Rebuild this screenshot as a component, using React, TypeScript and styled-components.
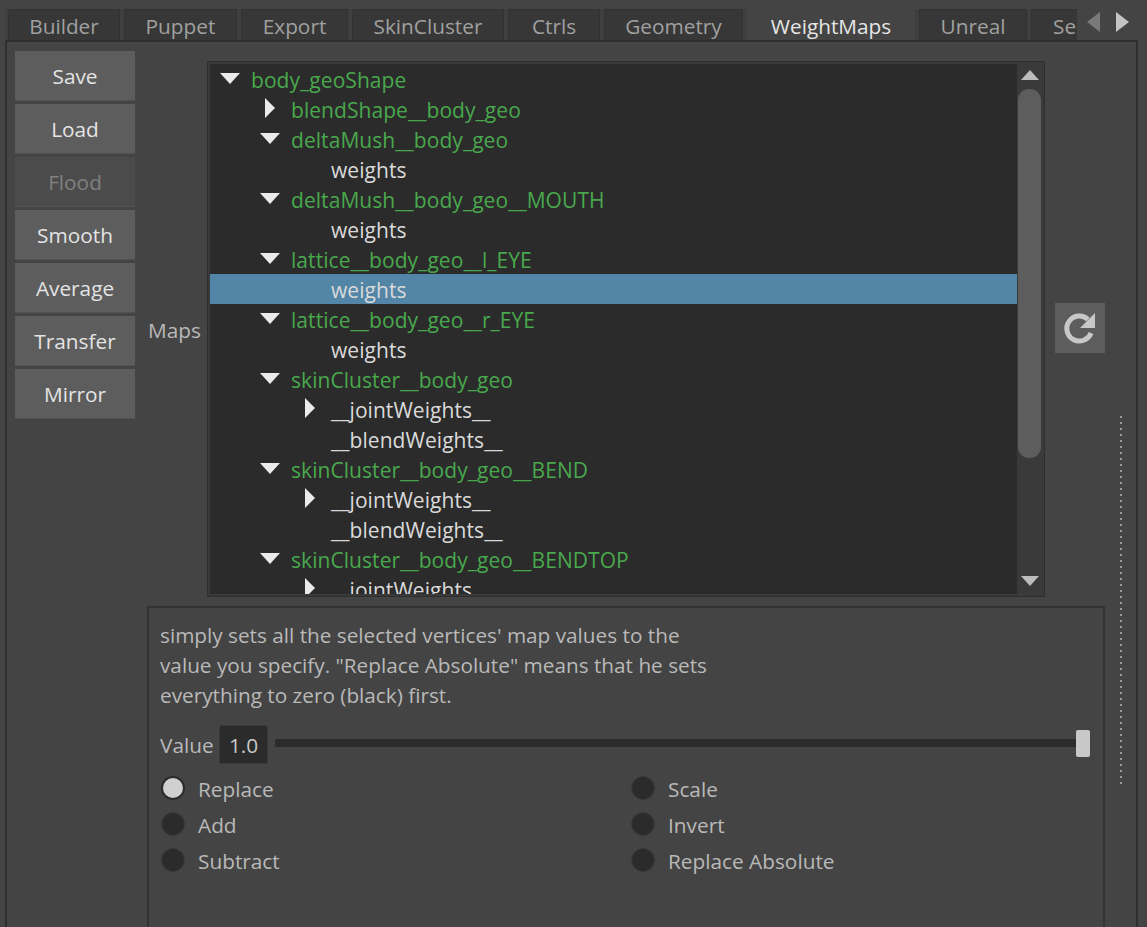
import React from "react";
import styled, { createGlobalStyle } from "styled-components";

const Global = createGlobalStyle`
  html, body { margin: 0; padding: 0; background: #444444; }
  body { font-family: "Open Sans", "Noto Sans", sans-serif; font-size: 20.8px; color: #b9b9b9; }
  * { box-sizing: border-box; }
`;

const Page = styled.div`
  width: 1147px; height: 927px; overflow: hidden; background: #444444;
  padding: 9px 9px 0 5px; display: flex; flex-direction: column;
`;
const TabRow = styled.div`
  display: flex; height: 31px; flex: none;
`;
const TabStrip = styled.div`
  width: 1072px; padding-left: 3px; display: flex; gap: 4px; overflow: hidden; flex: none;
  background: #3f3f3f;
`;
const Tab = styled.div<{ $w: number; $active?: boolean }>`
  width: ${(p) => p.$w}px; flex: none; height: 31px;
  text-align: center; line-height: 33px; white-space: nowrap; overflow: hidden;
  background: ${(p) => (p.$active ? "#444444" : "#373737")};
  color: ${(p) => (p.$active ? "#e6e6e6" : "#a0a0a0")};
  border: 1px solid ${(p) => (p.$active ? "#444444" : "#323232")};
  border-bottom: 0; border-radius: 2px 2px 0 0;
`;
const TabClip = styled(Tab)`
  text-align: left; padding-left: 21px;
`;
const TabArrows = styled.div`
  flex: 1; display: flex; align-items: center; gap: 16px; padding: 0 0 5px 10px;
`;
const Panel = styled.div`
  flex: 1; min-height: 0; border: 0 solid #2f2f2f; border-width: 2px 2px 0 2px;
  padding: 9px 0 0 8px; display: flex; background: #444444;
`;
const ButtonColumn = styled.div`
  width: 120px; flex: none; display: flex; flex-direction: column; gap: 3px;
`;
const ToolButton = styled.div<{ $disabled?: boolean }>`
  height: 50px; display: flex; align-items: center; justify-content: center;
  background: ${(p) => (p.$disabled ? "#4b4b4b" : "#5d5d5d")};
  color: ${(p) => (p.$disabled ? "#808080" : "#e4e4e4")};
  box-shadow: inset 0 -1px 0 #525252;
`;
const Main = styled.div`
  width: 958px; margin-left: 12px; flex: none; display: flex; flex-direction: column; gap: 9px;
`;
const TreeRow = styled.div`
  display: flex; height: 536px; margin-top: 10px; flex: none;
`;
const MapsLabel = styled.div`
  width: 60px; flex: none; padding-left: 1px; align-self: center; color: #b9b9b9; margin-top: 2px;
`;
const TreeBox = styled.div`
  width: 838px; height: 536px; flex: none; border: 1px solid #2e2e2e; background: #3a3a3a;
  padding: 2px; display: flex;
`;
const TreeList = styled.div`
  width: 807px; flex: none; background: #2b2b2b; overflow: hidden;
  font-size: 21px; letter-spacing: 0.06px;
`;
const Row = styled.div<{ $selected?: boolean; $depth: number }>`
  height: 30px; display: flex; align-items: center; position: relative;
  padding-left: ${(p) => 41 + p.$depth * 40}px; padding-top: 2px;
  background: ${(p) => (p.$selected ? "#5285a6" : "transparent")};
  white-space: nowrap;
`;
const RowLabel = styled.span<{ $node?: boolean }>`
  color: ${(p) => (p.$node ? "#49a84d" : "#dadada")};
`;
const Expander = styled.svg<{ $depth: number }>`
  position: absolute; top: 4px; left: ${(p) => 10 + p.$depth * 40}px;
`;
const ScrollBar = styled.div`
  flex: 1; display: flex; flex-direction: column; align-items: center; padding-top: 6px;
  background: #3a3a3a;
`;
const ScrollArrow = styled.svg`
  flex: none;
`;
const ScrollThumb = styled.div`
  width: 23px; height: 369px; margin-top: 9px; background: #5d5d5d; border-radius: 11px;
`;
const ScrollSpacer = styled.div`
  flex: 1;
`;
const ScrollDown = styled(ScrollArrow)`
  margin-bottom: 8px;
`;
const RefreshBox = styled.div`
  width: 50px; height: 50px; margin: 242px 0 0 10px; flex: none; background: #5d5d5d;
  display: flex; align-items: center; justify-content: center;
`;
const InfoBox = styled.div`
  width: 958px; flex: 1; border: 0 solid #333333; border-width: 2px 2px 0 2px; padding: 12px 11px 0 11px;
`;
const Description = styled.p`
  margin: 0; line-height: 30px; color: #b9b9b9; font-size: 20.75px;
`;
const ValueRow = styled.div`
  margin-top: 15px; height: 39px; display: flex; align-items: center;
`;
const ValueLabel = styled.div`
  width: 59px; flex: none; color: #b9b9b9;
`;
const ValueInput = styled.div`
  width: 49px; height: 39px; flex: none; background: #2b2b2b; border: 1px solid #3a3a3a; border-radius: 2px;
  color: #c8c8c8; text-align: center; line-height: 38px;
`;
const Track = styled.div`
  width: 815px; margin-left: 7px; height: 8px; flex: none; background: #2b2b2b; position: relative; margin-top: -3px;
  border-radius: 1px;
`;
const Thumb = styled.div`
  position: absolute; right: 0; top: -9px; width: 14px; height: 27px; background: #c8c8c8; border-radius: 2px;
`;
const RadioGrid = styled.div`
  display: grid; grid-template-columns: 470px 1fr; grid-auto-rows: 36px; margin-top: 7px;
`;
const RadioItem = styled.div`
  display: flex; align-items: center; gap: 13px; padding-left: 1px;
`;
const RadioDot = styled.span<{ $on?: boolean }>`
  width: 24px; height: 24px; border-radius: 50%; flex: none; margin-top: -2px;
  background: ${(p) => (p.$on ? "#d0d0d0" : "#2b2b2b")};
  border: ${(p) => (p.$on ? "2px solid #2b2b2b" : "1px solid #3a3a3a")};
`;
const RadioText = styled.span`
  color: #b9b9b9;
`;
const Splitter = styled.div`
  width: 2px; height: 368px; flex: none; margin: 365px 0 0 15px;
  background-image: repeating-linear-gradient(to bottom, #9a9a9a 0 2px, transparent 2px 6px);
`;

const tabs: [string, number][] = [
  ["Builder", 112], ["Puppet", 113], ["Export", 107], ["SkinCluster", 152], ["Ctrls", 92], ["Geometry", 139],
];

const tree: { t: string; d: number; node?: boolean; e?: "open" | "closed"; sel?: boolean }[] = [
  { t: "body_geoShape", d: 0, node: true, e: "open" },
  { t: "blendShape__body_geo", d: 1, node: true, e: "closed" },
  { t: "deltaMush__body_geo", d: 1, node: true, e: "open" },
  { t: "weights", d: 2 },
  { t: "deltaMush__body_geo__MOUTH", d: 1, node: true, e: "open" },
  { t: "weights", d: 2 },
  { t: "lattice__body_geo__l_EYE", d: 1, node: true, e: "open" },
  { t: "weights", d: 2, sel: true },
  { t: "lattice__body_geo__r_EYE", d: 1, node: true, e: "open" },
  { t: "weights", d: 2 },
  { t: "skinCluster__body_geo", d: 1, node: true, e: "open" },
  { t: "__jointWeights__", d: 2, e: "closed" },
  { t: "__blendWeights__", d: 2 },
  { t: "skinCluster__body_geo__BEND", d: 1, node: true, e: "open" },
  { t: "__jointWeights__", d: 2, e: "closed" },
  { t: "__blendWeights__", d: 2 },
  { t: "skinCluster__body_geo__BENDTOP", d: 1, node: true, e: "open" },
  { t: "__jointWeights__", d: 2, e: "closed" },
];

const Tri = ({ open, depth }: { open: boolean; depth: number }) => (
  <Expander $depth={depth} width="20" height="20" viewBox="0 0 20 20">
    <polygon points={open ? "0,5 20,5 10,16" : "5,0 15,10 5,20"} fill="#ebebeb" />
  </Expander>
);

export default function App() {
  return (
    <Page>
      <Global />
      <TabRow>
        <TabStrip>
          {tabs.map(([t, w]) => (
            <Tab key={t} $w={w}>{t}</Tab>
          ))}
          <Tab $w={168} $active>WeightMaps</Tab>
          <Tab $w={108}>Unreal</Tab>
          <TabClip $w={60}>Se</TabClip>
        </TabStrip>
        <TabArrows>
          <svg width="13" height="20" viewBox="0 0 13 20"><polygon points="13,0 13,20 0,10" fill="#7a7a7a" /></svg>
          <svg width="13" height="20" viewBox="0 0 13 20"><polygon points="0,0 0,20 13,10" fill="#c4c4c4" /></svg>
        </TabArrows>
      </TabRow>
      <Panel>
        <ButtonColumn>
          {["Save", "Load"].map((b) => <ToolButton key={b}>{b}</ToolButton>)}
          <ToolButton $disabled>Flood</ToolButton>
          {["Smooth", "Average", "Transfer", "Mirror"].map((b) => <ToolButton key={b}>{b}</ToolButton>)}
        </ButtonColumn>
        <Main>
          <TreeRow>
            <MapsLabel>Maps</MapsLabel>
            <TreeBox>
              <TreeList>
                {tree.map((r, i) => (
                  <Row key={i} $depth={r.d} $selected={r.sel}>
                    {r.e && <Tri open={r.e === "open"} depth={r.d} />}
                    <RowLabel $node={r.node}>{r.t}</RowLabel>
                  </Row>
                ))}
              </TreeList>
              <ScrollBar>
                <ScrollArrow width="18" height="10" viewBox="0 0 18 10"><polygon points="9,0 18,10 0,10" fill="#bdbdbd" /></ScrollArrow>
                <ScrollThumb />
                <ScrollSpacer />
                <ScrollDown width="18" height="10" viewBox="0 0 18 10"><polygon points="0,0 18,0 9,10" fill="#bdbdbd" /></ScrollDown>
              </ScrollBar>
            </TreeBox>
            <RefreshBox>
              <svg width="36" height="36" viewBox="0 0 36 36">
                <path d="M29 23 A12.5 12.5 0 1 1 26 9.5" fill="none" stroke="#c8c8c8" strokeWidth="5" />
                <polygon points="33,3 33,18 18,18" fill="#c8c8c8" />
              </svg>
            </RefreshBox>
          </TreeRow>
          <InfoBox>
            <Description>
              simply sets all the selected vertices' map values to the<br />
              value you specify. "Replace Absolute" means that he sets<br />
              everything to zero (black) first.
            </Description>
            <ValueRow>
              <ValueLabel>Value</ValueLabel>
              <ValueInput>1.0</ValueInput>
              <Track><Thumb /></Track>
            </ValueRow>
            <RadioGrid>
              <RadioItem><RadioDot $on /><RadioText>Replace</RadioText></RadioItem>
              <RadioItem><RadioDot /><RadioText>Scale</RadioText></RadioItem>
              <RadioItem><RadioDot /><RadioText>Add</RadioText></RadioItem>
              <RadioItem><RadioDot /><RadioText>Invert</RadioText></RadioItem>
              <RadioItem><RadioDot /><RadioText>Subtract</RadioText></RadioItem>
              <RadioItem><RadioDot /><RadioText>Replace Absolute</RadioText></RadioItem>
            </RadioGrid>
          </InfoBox>
        </Main>
        <Splitter />
      </Panel>
    </Page>
  );
}
